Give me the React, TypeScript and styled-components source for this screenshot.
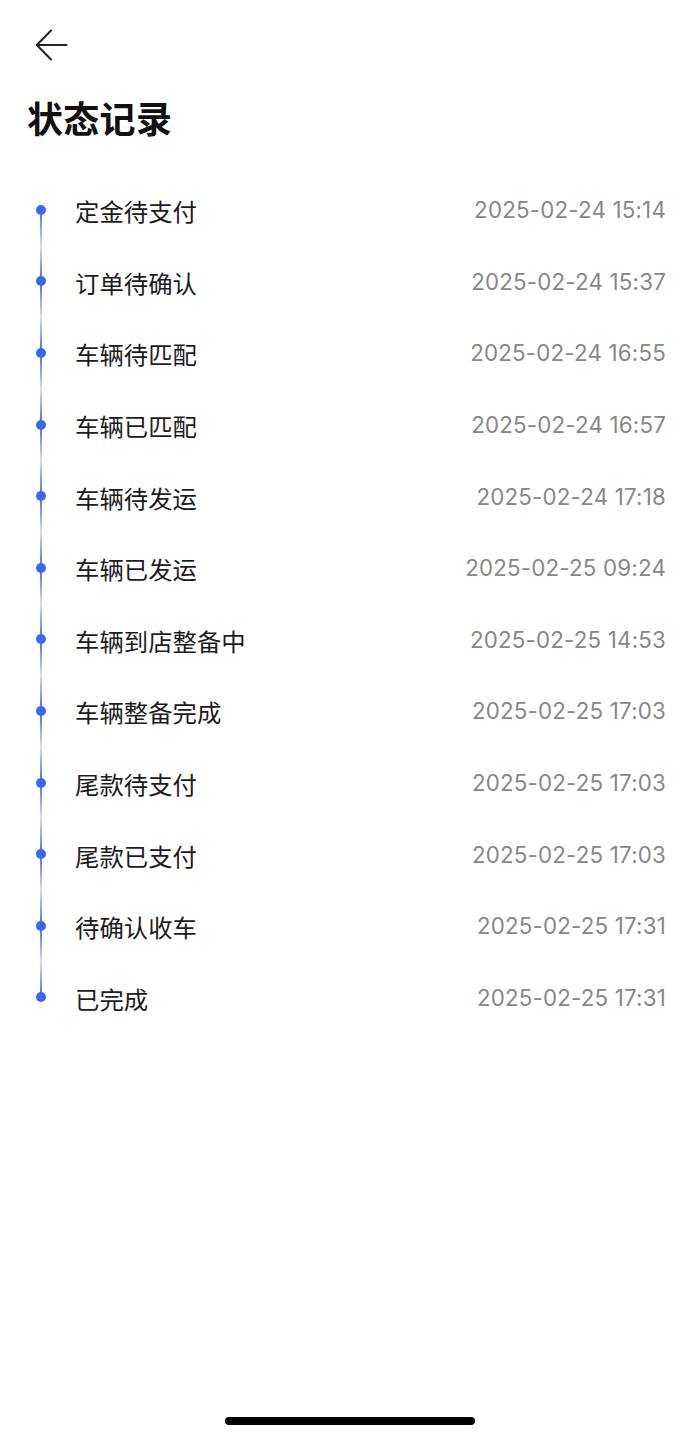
import React from "react";
import styled, { createGlobalStyle } from "styled-components";

const GlobalStyle = createGlobalStyle`
  html, body {
    margin: 0;
    padding: 0;
    background: #ffffff;
  }
  body {
    font-family: Inter, "Noto Sans CJK SC", sans-serif;
  }
`;

const Page = styled.div`
  width: 700px;
  height: 1438px;
  box-sizing: border-box;
  position: relative;
  display: flex;
  flex-direction: column;
  background: #fff;
`;

const BackButton = styled.button`
  margin: 27px 0 0 35px;
  width: 44px;
  height: 36px;
  padding: 0;
  border: none;
  background: transparent;
  display: flex;
  align-items: center;
  justify-content: flex-start;
  cursor: pointer;
`;

const Title = styled.h1`
  margin: 29px 0 0 27px;
  font-family: "Noto Sans CJK SC", sans-serif;
  font-size: 36px;
  font-weight: 700;
  line-height: 50px;
  color: #111;
  letter-spacing: 0.3px;
`;

const Timeline = styled.ul`
  list-style: none;
  margin: 32px 0 0;
  padding: 0 34px 0 36px;
`;

const Row = styled.li<{ $first: boolean; $last: boolean }>`
  position: relative;
  height: 71.6px;
  display: flex;
  align-items: center;
  padding-left: 40px;

  &::before {
    content: "";
    position: absolute;
    left: 3.5px;
    top: ${({ $first }) => ($first ? "50%" : "0")};
    bottom: ${({ $last }) => ($last ? "50%" : "0")};
    width: 2px;
    background: ${({ $first, $last }) =>
      $first
        ? "linear-gradient(#3f6ee8, #d3ddf7)"
        : $last
        ? "linear-gradient(#d3ddf7, #3f6ee8)"
        : "linear-gradient(#d3ddf7 0%, #3f6ee8 50%, #d3ddf7 100%)"};
  }

  &::after {
    content: "";
    position: absolute;
    left: -0.5px;
    top: 50%;
    width: 10px;
    height: 10px;
    margin-top: -5px;
    border-radius: 50%;
    background: #3a68ec;
  }
`;

const StatusName = styled.span`
  flex: 1;
  font-family: "Noto Sans CJK SC", sans-serif;
  font-size: 24.4px;
  color: #1c1c1c;
  margin-top: 2px;
  margin-left: -1px;
`;

const StatusTime = styled.span`
  font-family: Inter, sans-serif;
  font-size: 22.3px;
  color: #878787;
  letter-spacing: 0.2px;
`;

const HomeIndicator = styled.div`
  position: absolute;
  left: 225px;
  bottom: 13px;
  width: 250px;
  height: 8px;
  border-radius: 4px;
  background: #000;
`;

const records = [
  { name: "定金待支付", time: "2025-02-24 15:14" },
  { name: "订单待确认", time: "2025-02-24 15:37" },
  { name: "车辆待匹配", time: "2025-02-24 16:55" },
  { name: "车辆已匹配", time: "2025-02-24 16:57" },
  { name: "车辆待发运", time: "2025-02-24 17:18" },
  { name: "车辆已发运", time: "2025-02-25 09:24" },
  { name: "车辆到店整备中", time: "2025-02-25 14:53" },
  { name: "车辆整备完成", time: "2025-02-25 17:03" },
  { name: "尾款待支付", time: "2025-02-25 17:03" },
  { name: "尾款已支付", time: "2025-02-25 17:03" },
  { name: "待确认收车", time: "2025-02-25 17:31" },
  { name: "已完成", time: "2025-02-25 17:31" },
];

export default function App() {
  return (
    <>
      <GlobalStyle />
      <Page>
        <BackButton aria-label="返回">
          <svg width="33" height="32" viewBox="0 0 33 32" fill="none">
            <path
              d="M31.5 16H2.5M16 1.5L1.8 16L16 30.5"
              stroke="#222"
              strokeWidth="2"
              strokeLinecap="round"
              strokeLinejoin="round"
            />
          </svg>
        </BackButton>
        <Title>状态记录</Title>
        <Timeline>
          {records.map((r, i) => (
            <Row key={i} $first={i === 0} $last={i === records.length - 1}>
              <StatusName>{r.name}</StatusName>
              <StatusTime>{r.time}</StatusTime>
            </Row>
          ))}
        </Timeline>
        <HomeIndicator />
      </Page>
    </>
  );
}
